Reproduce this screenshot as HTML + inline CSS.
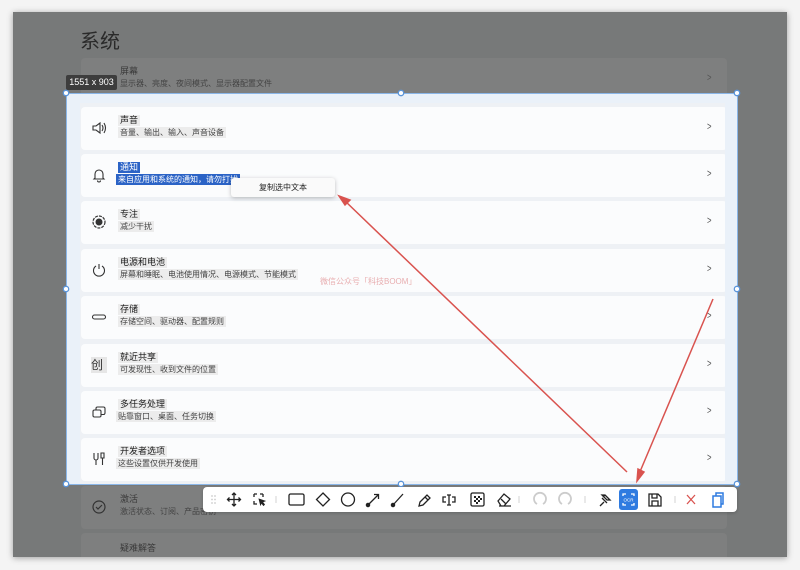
<!DOCTYPE html>
<html><head><meta charset="utf-8"><style>
*{margin:0;padding:0;box-sizing:border-box}
body{width:800px;height:570px;background:#f4f4f4;position:relative;overflow:hidden;font-family:"Liberation Sans","Noto Sans CJK SC",sans-serif}
.frame{position:absolute;left:13px;top:12px;width:774px;height:545px;box-shadow:0 1px 6px rgba(0,0,0,.35);overflow:hidden}
.layer{position:absolute;left:0;top:0;width:774px;height:545px}
.dark{background:#777979;color:#3a3a3a}
.light{background:#eef1f5;color:#1b1b1b;clip-path:inset(81px 50px 73px 53px)}
.title{position:absolute;left:67px;top:13px;font-size:20px;color:#2a2a2a}
.dark .title{color:#2a2a2a}
.card{position:absolute;left:68px;width:646px;height:43px;border-radius:4px}
.dark .card{background:#7e7f7f}
.light .card{background:#fbfcfd}
.ic{position:absolute;left:10px;top:13px;width:16px;height:16px}
.t{position:absolute;left:37px;top:8px;font-size:9px;line-height:11px;padding:0 2px}
.s{position:absolute;left:37px;top:20px;font-size:8px;line-height:11px;padding:0 2px;color:#444}
.light .t,.light .s{background:#ececec}
.chev{position:absolute;left:625px;top:14px;font-size:11px;color:#555;transform:scaleX(.7)}
.sel{background:#2b63c6!important;color:#fff!important}
</style></head><body>
<div class="frame">
<div class="layer dark">
<div class="title">系统</div>
<div class="card" style="top:46px"><div class="t">屏幕</div><div class="s">显示器、亮度、夜间模式、显示器配置文件</div><div class="chev">&gt;</div></div>
<div class="card" style="top:474px"><svg class="ic" viewBox="0 0 16 16"><circle cx="8" cy="8" r="6" fill="none" stroke="#333" stroke-width="1.2"/><path d="M5 8l2 2 4-4" fill="none" stroke="#333" stroke-width="1.2"/></svg><div class="t">激活</div><div class="s">激活状态、订阅、产品密钥</div></div>
<div class="card" style="top:521px"><div class="t" style="top:10px">疑难解答</div></div>
</div>
<div class="layer light">
<div class="card" style="top:46px"><div class="t">屏幕</div><div class="s">显示器、亮度、夜间模式、显示器配置文件</div><div class="chev">&gt;</div></div>
<div class="card" style="top:95px"><svg class="ic" viewBox="0 0 16 16"><path d="M2 6h3l4-3v10l-4-3H2z M11 5q2 3 0 6 M13 3q3 5 0 10" fill="none" stroke="#333" stroke-width="1.1"/></svg><div class="t">声音</div><div class="s">音量、输出、输入、声音设备</div><div class="chev">&gt;</div></div>
<div class="card" style="top:142px"><svg class="ic" viewBox="0 0 16 16"><path d="M4 11V7a4 4 0 0 1 8 0v4l1 1H3z M6.5 13.5a1.5 1.5 0 0 0 3 0" fill="none" stroke="#333" stroke-width="1.1"/></svg><div class="t sel">通知</div><div class="s sel" style="left:35px">来自应用和系统的通知，请勿打扰</div><div class="chev">&gt;</div></div>
<div class="card" style="top:189px"><svg class="ic" viewBox="0 0 16 16"><circle cx="8" cy="8" r="6" fill="none" stroke="#333" stroke-width="1.2" stroke-dasharray="3 1"/><circle cx="8" cy="8" r="3.5" fill="#333"/></svg><div class="t">专注</div><div class="s">减少干扰</div><div class="chev">&gt;</div></div>
<div class="card" style="top:237px"><svg class="ic" viewBox="0 0 16 16"><path d="M5 4a5.5 5.5 0 1 0 6 0 M8 2v5" fill="none" stroke="#333" stroke-width="1.1"/></svg><div class="t">电源和电池</div><div class="s">屏幕和睡眠、电池使用情况、电源模式、节能模式</div><div class="chev">&gt;</div></div>
<div class="card" style="top:284px"><svg class="ic" viewBox="0 0 16 16"><rect x="1.5" y="6" width="13" height="4" rx="2" fill="none" stroke="#333" stroke-width="1.1"/></svg><div class="t">存储</div><div class="s">存储空间、驱动器、配置规则</div><div class="chev">&gt;</div></div>
<div class="card" style="top:332px"><div class="ic" style="font-size:12px;line-height:16px;background:#e6e6e6;color:#333">创</div><div class="t">就近共享</div><div class="s">可发现性、收到文件的位置</div><div class="chev">&gt;</div></div>
<div class="card" style="top:379px"><svg class="ic" viewBox="0 0 16 16"><rect x="2" y="6" width="8" height="7" rx="1.5" fill="none" stroke="#333" stroke-width="1.1"/><path d="M5 6V4.5A1.5 1.5 0 0 1 6.5 3h6A1.5 1.5 0 0 1 14 4.5V9a1.5 1.5 0 0 1-1.5 1.5H10" fill="none" stroke="#333" stroke-width="1.1"/></svg><div class="t">多任务处理</div><div class="s" style="left:35px">贴靠窗口、桌面、任务切换</div><div class="chev">&gt;</div></div>
<div class="card" style="top:426px"><svg class="ic" viewBox="0 0 16 16"><path d="M3 2v5a2 2 0 0 0 4 0V2 M5 9v5 M10 2h3v5h-3z M11.5 7v7" fill="none" stroke="#333" stroke-width="1.1"/></svg><div class="t">开发者选项</div><div class="s" style="left:35px">这些设置仅供开发使用</div><div class="chev">&gt;</div></div>
</div>
</div>
<!-- selection box -->
<div style="position:absolute;left:66px;top:93px;width:672px;height:392px;border:1.5px solid #8ab6e8"></div>
<div style="position:absolute;left:67px;top:94px;width:13px;height:390px;background:#eaf1f9"></div>
<div style="position:absolute;left:725px;top:94px;width:12px;height:390px;background:#eaf1f9"></div>
<div style="position:absolute;left:67px;top:94px;width:670px;height:9px;background:#eaf1f9"></div>
<svg style="position:absolute;left:0;top:0" width="800" height="570">
<g fill="#fff" stroke="#5b95da" stroke-width="1.3">
<circle cx="66" cy="93" r="2.7"/><circle cx="401" cy="93" r="2.7"/><circle cx="737" cy="93" r="2.7"/>
<circle cx="66" cy="289" r="2.7"/><circle cx="737" cy="289" r="2.7"/>
<circle cx="66" cy="484" r="2.7"/><circle cx="401" cy="484" r="2.7"/><circle cx="737" cy="484" r="2.7"/>
</g>
<g stroke="#d9534f" stroke-width="1.5" fill="#d9534f">
<line x1="627" y1="472" x2="344" y2="200"/>
<path d="M339 196l11 4-5 5z"/>
<line x1="713" y1="299" x2="639" y2="474"/>
<path d="M637 481l1-12 6 3z"/>
</g>
</svg>
<div style="position:absolute;left:320px;top:276px;font-size:8px;color:#e8aeb0">微信公众号「科技BOOM」</div>
<div style="position:absolute;left:66px;top:75px;width:51px;height:15px;background:#3d3d3d;color:#fff;font-size:9px;line-height:15px;text-align:center;border-radius:2px">1551 x 903</div>
<div style="position:absolute;left:231px;top:178px;width:104px;height:19px;background:#fafafa;box-shadow:0 1px 4px rgba(0,0,0,.25);border-radius:3px;font-size:8px;line-height:19px;text-align:center;color:#222">复制选中文本</div>
<!-- toolbar -->
<div style="position:absolute;left:203px;top:487px;width:534px;height:25px;background:#fff;border-radius:4px;box-shadow:0 1px 3px rgba(0,0,0,.2)"></div>
<svg style="position:absolute;left:203px;top:487px" width="534" height="25" viewBox="0 0 534 25" fill="none" stroke="#222" stroke-width="1.3">
<g fill="#ccc" stroke="none"><circle cx="9" cy="9" r=".9"/><circle cx="12" cy="9" r=".9"/><circle cx="9" cy="12.5" r=".9"/><circle cx="12" cy="12.5" r=".9"/><circle cx="9" cy="16" r=".9"/><circle cx="12" cy="16" r=".9"/></g>
<path d="M31 6v13M24.5 12.5h13M29 8l2-2 2 2M29 17l2 2 2-2M26.5 10.5l-2 2 2 2M35.5 10.5l2 2-2 2"/>
<path d="M51 7h3M57 7h3M51 7v3M51 14v3h3M60 7v3" stroke-dasharray="0"/><path d="M56 12l6 2-2.5 1 2 2.5-1 1-2-2.5-1 2z" fill="#222" stroke-width=".8"/>
<line x1="73" y1="9" x2="73" y2="16" stroke="#ddd"/>
<rect x="86" y="7" width="15" height="11" rx="1.5"/>
<path d="M120 6l6.5 6.5-6.5 6.5-6.5-6.5z"/>
<circle cx="145" cy="12.5" r="6.5"/>
<path d="M165 18l10-10M171 7.5h4.5V12"/><circle cx="165" cy="18" r="1.6" fill="#222"/>
<path d="M190 18l10-11"/><circle cx="190" cy="18" r="1.6" fill="#222"/>
<path d="M216 19l1-4 7-7 3 3-7 7z M222 10l3 3"/>
<path d="M246 8v10M244 8h4M244 18h4M243 10h-3v5h3M249 10h3v5h-3"/>
<rect x="268" y="6" width="13" height="13" rx="1.5"/><g fill="#222" stroke="none"><rect x="271" y="9" width="2" height="2"/><rect x="275" y="9" width="2" height="2"/><rect x="273" y="11" width="2" height="2"/><rect x="277" y="11" width="2" height="2"/><rect x="271" y="13" width="2" height="2"/><rect x="275" y="13" width="2" height="2"/><rect x="273" y="15" width="2" height="2"/></g>
<path d="M295 14l6-7 6 5-6 7h-3z M298 12l5 5 M296 19h12"/>
<line x1="316" y1="9" x2="316" y2="16" stroke="#ddd"/>
<path d="M334 17a6 6 0 1 1 6 0" stroke="#ccc" stroke-width="1.8"/>
<path d="M359 17a6 6 0 1 1 6 0" stroke="#ccc" stroke-width="1.8"/>
<line x1="382" y1="9" x2="382" y2="16" stroke="#ddd"/>
<path d="M397 19l4-4 M399 11l5 5 M402 8l5 5 -3 0 -5-5z M400 10l2 -2"/>
<rect x="416" y="2" width="19" height="21" rx="3" fill="#2f7be0" stroke="none"/>
<path d="M420 9V7h3M431 9V7h-3M420 16v2h3M431 16v2h-3" stroke="#fff"/><text x="425.5" y="14.5" font-size="4.5" fill="#fff" stroke="none" text-anchor="middle" font-family="Liberation Sans">OCR</text>
<path d="M446 7h9l3 3v9h-12z M449 7v4h5V7 M449 19v-5h6v5"/>
<line x1="472" y1="9" x2="472" y2="16" stroke="#ddd"/>
<path d="M484 8l8 9M492 8l-8 9" stroke="#d9534f"/>
<path d="M510 9h8v11h-8z M513 9V6h7v11h-2" stroke="#2f7be0" stroke-width="1.5"/>
</svg>
</body></html>
